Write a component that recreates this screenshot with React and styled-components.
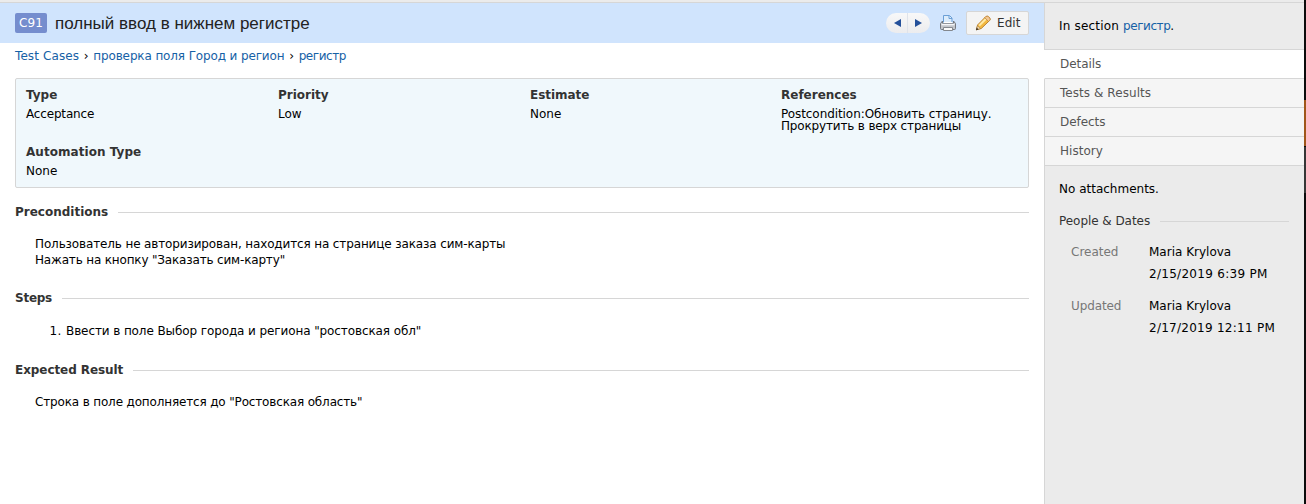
import React from "react";
import styled, { createGlobalStyle } from "styled-components";

const Global = createGlobalStyle`
  * { box-sizing: border-box; }
  body { margin: 0; background: #fff; color: #000; font: 12px/14px Verdana, "DejaVu Sans", sans-serif; }
`;

const Page = styled.div`
  display: flex;
  width: 1306px;
  height: 504px;
  overflow: hidden;
`;
const Window = styled.div`
  width: 1304px;
  display: flex;
  flex-direction: column;
`;
const TopStrip = styled.div`
  height: 3px;
  flex: none;
  background: #ebebeb;
  border-bottom: 1px solid #d6d6d6;
`;
const Columns = styled.div`
  flex: 1;
  display: flex;
  min-height: 0;
`;
const Main = styled.main`
  width: 1044px;
`;
const Text = styled.span`
  white-space: nowrap;
  letter-spacing: ${(p) => p.$ls || 0}px;
`;
const Header = styled.header`
  height: 40px;
  display: flex;
  align-items: center;
  padding: 0 15px;
  background: #d0e4fd;
`;
const CaseId = styled.span`
  width: 32px;
  height: 20px;
  border-radius: 2px;
  background: #758dce;
  color: #fff;
  line-height: 20px;
  text-align: center;
`;
const Title = styled.h1`
  margin: 0 auto 0 8px;
  padding-top: 1px;
  font: 17px/20px Arial, "Liberation Sans", sans-serif;
  color: #222;
  white-space: nowrap;
`;
const Pager = styled.div`
  display: flex;
  width: 44px;
  height: 20px;
  border-radius: 10px;
  background: linear-gradient(#f8f8f8, #ececee);
  overflow: hidden;
`;
const PagerButton = styled.span`
  flex: none;
  width: 21px;
  display: flex;
  align-items: center;
  justify-content: flex-end;
  padding-right: 6px;
  & + & { width: 23px; justify-content: flex-start; padding: 0 0 0 7px; border-left: 1px solid #dfe3ea; }
`;
const PrintIcon = styled.svg`
  margin: 0 10px;
  flex: none;
`;
const EditButton = styled.button`
  width: 63px;
  height: 24px;
  display: flex;
  align-items: center;
  gap: 5px;
  padding: 0 0 1px 8px;
  border: 1px solid #d6d6d6;
  border-radius: 2px;
  background: #f4f4f4;
  font: inherit;
  color: #333;
`;
const Link = styled(Text)`
  color: #1661a6;
`;
const Breadcrumb = styled.nav`
  display: flex;
  gap: 4.7px;
  padding: 6px 15px 0;
  height: 35px;
`;
const Properties = styled.section`
  margin: 0 15px;
  height: 110px;
  padding: 9px 10px;
  border: 1px solid #d6d6d6;
  border-radius: 2px;
  background: #f0f8fc;
  display: grid;
  grid-template-columns: 252px 252px 251px 1fr;
  grid-template-rows: 57px 1fr;
`;
const PropLabel = styled.div`
  font-weight: bold;
  color: #333;
  margin-bottom: 6px;
`;
const PropValue = styled.div`
  line-height: 12px;
`;
const Line = styled.div``;
const Section = styled.section`
  padding: ${(p) => p.$top}px 15px 0;
`;
const SectionHead = styled.div`
  display: flex;
  gap: 10px;
  font-weight: ${(p) => (p.$light ? "normal" : "bold")};
  color: #333;
  height: 14px;
  &::after { content: ""; flex: 1; margin-top: 7px; height: 1px; background: #d6d6d6; }
`;
const SectionBody = styled.div`
  padding: ${(p) => p.$top}px 20px 0;
  line-height: 16px;
`;
const Steps = styled.ol`
  margin: 0;
  padding: 0 0 0 31px;
  letter-spacing: 0.4px;
`;
const Sidebar = styled.aside`
  width: 260px;
  background: #ebebeb;
  display: flex;
  flex-direction: column;
`;
const SectionInfo = styled.div`
  height: 47px;
  padding: 16px 14px 0;
  border: 0 solid #d6d6d6;
  border-width: 0 0 1px 1px;
`;
const Tab = styled.div`
  height: 29px;
  padding-left: 15px;
  line-height: 28px;
  color: #555;
  border-bottom: 1px solid #d6d6d6;
  border-left: 1px solid ${(p) => (p.$active ? "#fff" : "#d6d6d6")};
  background: ${(p) => (p.$active ? "#fff" : "#f5f5f5")};
`;
const Info = styled.div`
  flex: 1;
  padding: 16px 15px 0 14px;
  border-left: 1px solid #d6d6d6;
`;
const Attachments = styled.div`
  height: 32px;
`;
const People = styled.dl`
  margin: 13px 0 0 12px;
  display: grid;
  grid-template-columns: 78px 1fr;
  row-gap: 10px;
  line-height: 22px;
`;
const Term = styled.dt`
  color: #777;
`;
const Detail = styled.dd`
  margin: 0;
`;
const Edge = styled.div`
  width: 2px;
  display: flex;
  flex-direction: column;
`;
const EdgePart = styled.div`
  height: ${(p) => p.$h}px;
  background: ${(p) => p.$c};
`;

const tabs = [
  ["Details", -0.05],
  ["Tests & Results", 0.06],
  ["Defects", -0.05],
  ["History", 0.02],
];

function Property({ label, lines, ls, vls = [] }) {
  return (
    <div>
      <PropLabel><Text $ls={ls}>{label}</Text></PropLabel>
      <PropValue>
        {lines.map((l, i) => <Line key={l}><Text $ls={vls[i]}>{l}</Text></Line>)}
      </PropValue>
    </div>
  );
}

export default function App() {
  return (
    <Page>
      <Global />
      <Window>
        <TopStrip />
        <Columns>
          <Main>
            <Header>
              <CaseId><Text $ls={0.2}>C91</Text></CaseId>
              <Title>полный ввод в нижнем регистре</Title>
              <Pager>
                <PagerButton>
                  <svg width="7" height="8" viewBox="0 0 7 8"><path d="M7 0v8L0 4z" fill="#24509a" /></svg>
                </PagerButton>
                <PagerButton>
                  <svg width="7" height="8" viewBox="0 0 7 8"><path d="M0 0v8L7 4z" fill="#24509a" /></svg>
                </PagerButton>
              </Pager>
              <PrintIcon width="16" height="16" viewBox="0 0 16 16">
                <path d="M3.5 8V.5h6l2.500 2.500V8z" fill="#dcecfb" stroke="#6b9fd6" />
                <path d="M9 1v2.500h3" fill="none" stroke="#6b9fd6" />
                <path d="M2.500 6v2.500h11V6l2 2.500v5q0 1-1 1h-13q-1 0-1-1v-5z" fill="#c3c6cb" stroke="#74787f" />
                <path d="M1.500 9.500h13" stroke="#f5f6f8" strokeWidth="1.500" />
                <path d="M3.500 7.500h9" stroke="#fff" />
                <path d="M3.500 12.500h9v3h-9z" fill="#fafafa" stroke="#84888e" />
              </PrintIcon>
              <EditButton>
                <svg width="17" height="16" viewBox="0 0 17 16">
                  <path d="M1.400 14.800l1.200-4.900L10.700 1.700q1.400-1.200 2.800 0l1.100 1.100q1.200 1.400 0 2.700L6.300 13.500z" fill="#f2b840" stroke="#b57a28" strokeWidth=".9" />
                  <path d="M4.200 10.600l6.800-6.800" stroke="#ffeaa6" strokeWidth="2" />
                  <path d="M10.700 1.700q1.400-1.200 2.800 0l1.100 1.100q1.200 1.400 0 2.700l-1 1-3.900-3.800z" fill="#f3c795" stroke="#b57a28" strokeWidth=".6" />
                  <path d="M1.400 14.800l1.100-4.100 2.900 2.900z" fill="#f5deb4" stroke="#a57b3e" strokeWidth=".6" />
                  <path d="M1 15.200l.7-2.600 1.900 1.900z" fill="#3d3426" />
                </svg>
                <Text $ls={0.05}>Edit</Text>
              </EditButton>
            </Header>
            <Breadcrumb>
              <Link $ls={0.1}>Test Cases</Link>
              <Text>›</Text>
              <Link $ls={-0.13}>проверка поля Город и регион</Link>
              <Text>›</Text>
              <Link $ls={-0.42}>регистр</Link>
            </Breadcrumb>
            <Properties>
              <Property label="Type" lines={["Acceptance"]} vls={[-0.17]} />
              <Property label="Priority" lines={["Low"]} />
              <Property label="Estimate" lines={["None"]} ls={-0.05} />
              <Property label="References" lines={["Postcondition:Обновить страницу.", "Прокрутить в верх страницы"]} vls={[-0.07, -0.16]} />
              <Property label="Automation Type" lines={["None"]} ls={0.05} />
            </Properties>
            <Section $top={17}>
              <SectionHead><Text>Preconditions</Text></SectionHead>
              <SectionBody $top={17}>
                <Line><Text $ls={-0.135}>Пользователь не авторизирован, находится на странице заказа сим-карты</Text></Line>
                <Line><Text $ls={-0.17}>Нажать на кнопку "Заказать сим-карту"</Text></Line>
              </SectionBody>
            </Section>
            <Section $top={23}>
              <SectionHead><Text $ls={-0.25}>Steps</Text></SectionHead>
              <SectionBody $top={18}>
                <Steps><li><Text $ls={-0.1}>Ввести в поле Выбор города и региона "ростовская обл"</Text></li></Steps>
              </SectionBody>
            </Section>
            <Section $top={24}>
              <SectionHead><Text $ls={-0.07}>Expected Result</Text></SectionHead>
              <SectionBody $top={17}>
                <Text $ls={-0.155}>Строка в поле дополняется до "Ростовская область"</Text>
              </SectionBody>
            </Section>
          </Main>
          <Sidebar>
            <SectionInfo><Text $ls={0.18}>In section <Link $ls={-0.42}>регистр</Link>.</Text></SectionInfo>
            {tabs.map(([t, ls], i) => <Tab key={t} $active={i === 0}><Text $ls={ls}>{t}</Text></Tab>)}
            <Info>
              <Attachments><Text>No attachments.</Text></Attachments>
              <SectionHead $light><Text $ls={-0.05}>People &amp; Dates</Text></SectionHead>
              <People>
                <Term><Text>Created</Text></Term>
                <Detail><Line><Text>Maria Krylova</Text></Line><Line><Text $ls={0.29}>2/15/2019 6:39 PM</Text></Line></Detail>
                <Term><Text $ls={-0.12}>Updated</Text></Term>
                <Detail><Line><Text>Maria Krylova</Text></Line><Line><Text $ls={0.26}>2/17/2019 12:11 PM</Text></Line></Detail>
              </People>
            </Info>
          </Sidebar>
        </Columns>
      </Window>
      <Edge>
        <EdgePart $h={100} $c="#0c0c0c" />
        <EdgePart $h={46} $c="#a0561a" />
        <EdgePart $h={1} $c="#0c0c0c" />
        <EdgePart $h={46} $c="#363636" />
        <EdgePart $h={311} $c="#0c0c0c" />
      </Edge>
    </Page>
  );
}
